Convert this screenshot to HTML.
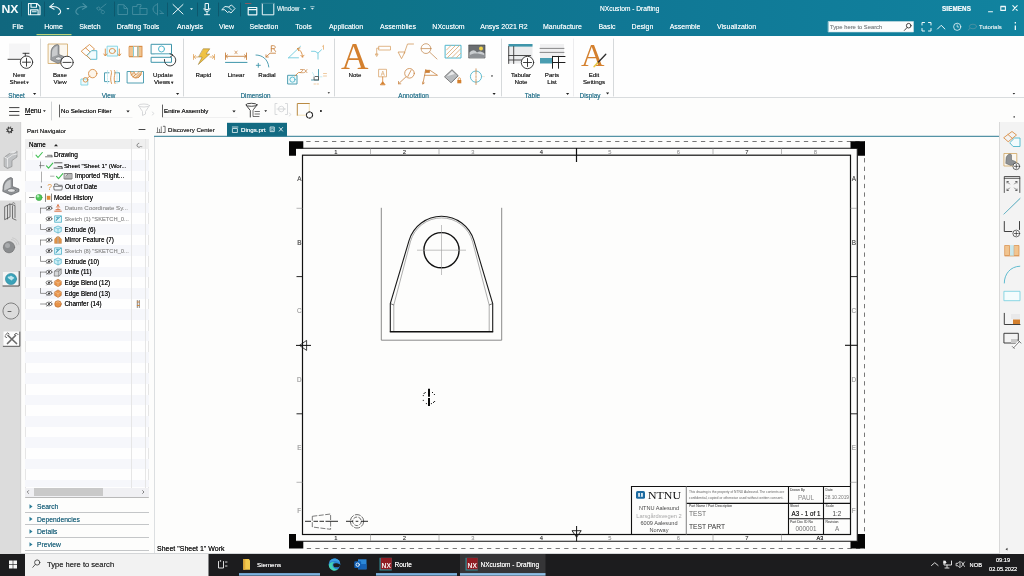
<!DOCTYPE html>
<html>
<head>
<meta charset="utf-8">
<title>NX - Drafting</title>
<style>
*{box-sizing:border-box;margin:0;padding:0}
html,body{width:1024px;height:576px;overflow:hidden;background:#fdfdfc;font-family:"Liberation Sans",sans-serif;}
#root{position:relative;width:1024px;height:576px;overflow:hidden;background:#fdfdfc;filter:blur(0.35px);}
.abs{position:absolute}
.t{position:absolute;white-space:nowrap;font-size:6.6px;line-height:8px;color:#222;text-shadow:0 0 0.3px currentColor;}
.w{color:#e8f3f6}
.c{text-align:center}
#hdr{left:0;top:0;width:1024px;height:36px;background:linear-gradient(90deg,#10677e 0%,#0f6c83 15%,#0e7389 38%,#107794 60%,#107e9b 85%,#11839f 100%)}
#ribbon{left:0;top:36px;width:1024px;height:62px;background:#fefefe;border-bottom:1px solid #d9dcde}
#selbar{left:0;top:98px;width:1024px;height:39px;}
#lside{left:0;top:122px;width:21px;height:433px;background:#dcdcdc}
#rside{left:999px;top:122px;width:25px;height:433px;background:#f3f3f3;border-left:1px solid #d9d9d9}
#task{left:0;top:554.3px;width:1024px;height:22px;background:#1c1c1e}
.gl{text-shadow:0 0 0.3px currentColor;position:absolute;font-size:6.4px;line-height:8px;color:#3a7f96;white-space:nowrap}
.rl{text-shadow:0 0 0.3px currentColor;position:absolute;font-size:6.15px;line-height:7.6px;color:#333;white-space:nowrap;text-align:center}
.vsep{position:absolute;width:1px;background:#d4d7d9}
.row{position:absolute;left:25px;width:124px;height:10.65px}
.tr{text-shadow:0 0 0.3px currentColor;position:absolute;white-space:nowrap;font-size:6.7px;line-height:8px;color:#1a1a1a}
.gr{color:#9a9a9a}
</style>
</head>
<body>
<div id="root">
<!-- HEADER -->
<div id="hdr" class="abs">
<svg class="abs" style="left:0;top:0" width="1024" height="36" viewBox="0 0 1024 36" fill="none" stroke-linecap="round" stroke-linejoin="round">
<!-- NX logo -->
<text x="1.5" y="13.2" font-family="Liberation Sans" font-weight="bold" font-size="10.6" fill="#f4fbfc" stroke="none" textLength="17" lengthAdjust="spacingAndGlyphs">NX</text>
<g stroke="#0c5368" stroke-width="0.8"><path d="M21.5 2v14M44.5 2v14M114.5 2v14M167.5 3v13M197.5 3v13M218.5 3v13M240.5 3v13"/></g>
<!-- save -->
<g stroke="#eef8fa" stroke-width="1.1"><path d="M28.5 3.5h8.5l3 3v8.2h-11.5z"/><path d="M31 3.8v3.4h5.5v-3.4M30.5 14.5v-4.6h7.6v4.6M32.2 11.8h4"/></g>
<!-- undo -->
<g stroke="#eef8fa" stroke-width="1.1"><path d="M53.5 3.6l-3.8 3.2l4.4 2.4"/><path d="M50 6.8c4-1 9 .2 10.3 3.4c.8 2-.6 3.6-2 4.2"/></g>
<path d="M67.2 8.6h1.5" stroke="#eef8fa" stroke-width="1.1"/>
<!-- redo dim -->
<g stroke="#4b93a5" stroke-width="1.1"><path d="M83 3.6l3.8 3.2l-4.4 2.4"/><path d="M86.5 6.8c-4-1-9 .2-10.3 3.4c-.8 2 .6 3.6 2 4.2"/></g>
<!-- dim cut -->
<g stroke="#3f8a9d" stroke-width="1"><path d="M97 8c1-2 3.5-1 3 1c-.5 2-3 1.500-3-1zM101 8l5-4M100 9.500l3 1c2 .6 2 3 0 3.200c-2 0-2.500-2-1-3.200"/></g>
<!-- dim copy -->
<g stroke="#3f8a9d" stroke-width="1"><path d="M118 5v9.500h9.500v-6l-3.500-3.500zM124 5v3.500h3.500"/></g>
<!-- dim paste -->
<g stroke="#3f8a9d" stroke-width="1"><path d="M133 6.500h4v-2h4v2h-1v8h-7zM140 8.500h7v6h-7"/></g>
<!-- dim -->
<g stroke="#3f8a9d" stroke-width="1"><path d="M157.500 3.500v11.500M153 9c0-3 2.500-4.500 4.500-4.500M153 9c0 3 2.500 5 4.500 5M160 10.500l3 3M160 13.500h3.500"/></g>
<!-- X -->
<path d="M173 4.500l10 9.500M183 4.500l-10 9.500" stroke="#eef8fa" stroke-width="1"/>
<path d="M190 8.200h3l-1.500 1.800z" fill="#eef8fa" stroke="none"/>
<!-- mic -->
<g stroke="#eef8fa" stroke-width="1"><path d="M205.500 3.500h3v6h-3zM204 8.500c0 4 6 4 6 0M207 11.500v3M204.500 14.700h5"/></g>
<!-- handshake -->
<g stroke="#e3f1f4" stroke-width="1"><path d="M222 9.500l3-3l3.500 .5l3-2l3.500 3.500l-4 4.500l-2-1.500l-1.500 1l-2.500-2.500z"/><path d="M228.500 7l3 3"/></g>
<!-- window icons -->
<g stroke="#eef8fa" stroke-width="1.2"><path d="M248.200 7.500h8.600v7.300h-8.600zM248.200 9.600h8.600"/><path d="M262.300 3.400v11.400h11.500v-11.400" stroke-width="1"/></g>
<path d="M245.500 3.500h5.500" stroke="#8a5a5f" stroke-width="1"/>
<path d="M262 3.300h12" stroke="#3b8699" stroke-width="1"/>
<path d="M303 8h3l-1.500 1.800z" fill="#e2eff2" stroke="none"/>
<path d="M310.700 6.700h3.400" stroke="#dcecf0" stroke-width="0.700"/><path d="M310.900 8.100h3l-1.500 1.700z" fill="#dcecf0" stroke="none"/>
<!-- home underline -->
<path d="M36.500 34.600h35" stroke="#b9d27a" stroke-width="1.100" stroke-linecap="butt"/>
<!-- search box -->
<rect x="828.500" y="21.500" width="85" height="10.500" fill="#fbfdfd" stroke="#cfe0e5" stroke-width="0.600"/>
<g stroke="#333" stroke-width="0.900"><circle cx="908.700" cy="25.700" r="2.300"/><path d="M907 27.600l-2.600 2.800"/></g>
<!-- right icons -->
<g stroke="#eef8fa" stroke-width="1"><path d="M922 25v-2.500h2.500M928.500 22.500h2.500v2.500M931 28.500v2.500h-2.500M924.500 31h-2.500v-2.500"/><path d="M937.500 29l3.700-3.700l3.700 3.700"/><circle cx="957.200" cy="26.800" r="3.600" stroke-width="0.800"/><path d="M957.200 24.800v2.200h1.500" stroke-width="0.700"/></g>
<g stroke="#4c91a3" stroke-width="0.900"><ellipse cx="973" cy="26.500" rx="3.600" ry="2.300"/><path d="M969.500 28.500l-1 1.500"/></g>
<g fill="#eef8fa" stroke="none"><rect x="1014.700" y="22" width="1.300" height="1.500"/><rect x="1014.700" y="25.500" width="1.300" height="4.500"/></g>
<!-- win controls -->
<g stroke="#eef8fa" stroke-width="1.100"><path d="M988.500 11.800h4"/><path d="M1000.800 6.800h4.600v3.600h-4.600zM1000.800 6.200h4.600" /><path d="M1012.800 5.600l4.400 4.800M1017.200 5.600l-4.400 4.800"/></g>
</svg>
<div class="t w c" style="left:-22.0px;width:80px;top:23px;font-size:7px">File</div>
<div class="t w c" style="left:13.5px;width:80px;top:23px;font-size:7px">Home</div>
<div class="t w c" style="left:50.0px;width:80px;top:23px;font-size:7px">Sketch</div>
<div class="t w c" style="left:98.0px;width:80px;top:23px;font-size:7px">Drafting Tools</div>
<div class="t w c" style="left:150.0px;width:80px;top:23px;font-size:7px">Analysis</div>
<div class="t w c" style="left:186.5px;width:80px;top:23px;font-size:7px">View</div>
<div class="t w c" style="left:224.0px;width:80px;top:23px;font-size:7px">Selection</div>
<div class="t w c" style="left:263.5px;width:80px;top:23px;font-size:7px">Tools</div>
<div class="t w c" style="left:306.0px;width:80px;top:23px;font-size:7px">Application</div>
<div class="t w c" style="left:358.0px;width:80px;top:23px;font-size:7px">Assemblies</div>
<div class="t w c" style="left:408.5px;width:80px;top:23px;font-size:7px">NXcustom</div>
<div class="t w c" style="left:464.0px;width:80px;top:23px;font-size:7px">Ansys 2021 R2</div>
<div class="t w c" style="left:522.5px;width:80px;top:23px;font-size:7px">Manufacture</div>
<div class="t w c" style="left:567.0px;width:80px;top:23px;font-size:7px">Basic</div>
<div class="t w c" style="left:602.5px;width:80px;top:23px;font-size:7px">Design</div>
<div class="t w c" style="left:645.0px;width:80px;top:23px;font-size:7px">Assemble</div>
<div class="t w c" style="left:696.5px;width:80px;top:23px;font-size:7px">Visualization</div>
<div class="t w" style="left:277px;top:4.500px;font-size:6.300px;color:#d4e8ed">Window</div>
<div class="t w" style="left:600px;top:4.500px;font-size:6.600px">NXcustom - Drafting</div>
<div class="t w" style="left:942px;top:5px;font-size:6.300px;font-weight:bold;letter-spacing:0.100px">SIEMENS</div>
<div class="t" style="left:830px;top:23px;font-size:5.800px;color:#8a8f92">Type here to Search</div>
<div class="t w" style="left:979px;top:23px;font-size:6px;color:#d6e8ec">Tutorials</div>
</div>
<!-- RIBBON -->
<div id="ribbon" class="abs">
<svg class="abs" style="left:0;top:0" width="1024" height="62" viewBox="0 36 1024 62" fill="none" stroke-linecap="round" stroke-linejoin="round">
<g stroke="#d6d9db" stroke-width="1"><path d="M40.500 39v57M183.500 39v57M334.500 39v57M501.500 39v57M613.500 39v57"/></g>
<path d="M573.500 39v57" stroke="#ececee" stroke-width="1"/>
<!-- new sheet -->
<rect x="9" y="43.500" width="21" height="15" fill="#f5f5f6" stroke="none"/>
<g stroke="#2b2b2b" stroke-width="0.900"><path d="M8 59.300h13M23 53.300h6M25.300 53.300v3"/><circle cx="26.500" cy="62.200" r="6.200" fill="#fefefe"/><path d="M22.500 62.200h8M26.500 58.200v8"/></g>
<!-- base view -->
<rect x="48.500" y="44" width="19" height="19.500" stroke="#cfa45f" stroke-width="0.800" fill="#fbf7ef"/>
<path d="M51 52c0-4 3-7 6.500-7.500l1.500 1v9l6 2.500v3l-7 3.500l-7-3.500z" fill="#9c9fa2" stroke="#5f6366" stroke-width="0.600"/>
<path d="M52 52.500c0-3 2.500-6 5.500-6.500v9l-5.500 2z" fill="#c9cbcd" stroke="none"/>
<ellipse cx="58.500" cy="58.500" rx="3" ry="1.600" fill="#e6e7e8" stroke="#5f6366" stroke-width="0.500"/>
<g stroke="#2b2b2b" stroke-width="0.900"><circle cx="67" cy="62.400" r="6.200" fill="#fefefe"/><path d="M63 62.400h8"/></g>
<!-- projected view -->
<g stroke-width="0.900"><path d="M81.500 51l8-6.500l5 4.500l-8 6.500zM85.500 47.800l5 4.500" stroke="#d88d45"/><path d="M87 55.500l4.500-4.800h5.300v8.600h-6z" stroke="#4fb6cc" fill="#f2fbfd"/><path d="M86.500 55.500l4 3.800" stroke="#d88d45"/></g>
<!-- view w/ arrows -->
<g stroke-width="0.900"><rect x="107.500" y="46.200" width="10" height="9.800" stroke="#7fd3e2" fill="#eefafc"/><ellipse cx="112.300" cy="51" rx="3" ry="2.500" stroke="#d88d45"/><path d="M105.300 49v6.500M103.800 54l1.500 2l1.500-2M119.300 49v6.500M117.800 54l1.500 2l1.500-2" stroke="#d88d45"/></g>
<!-- section -->
<g stroke-width="0.900"><rect x="129.500" y="46.500" width="4" height="10" fill="#f1c48f" stroke="#d88d45"/><rect x="138" y="46.500" width="4" height="10" fill="#f1c48f" stroke="#d88d45"/><path d="M129.500 46.300h12.500M129.500 56.800h12.500" stroke="#d88d45"/><path d="M133.500 46.500v10M138 46.500v10" stroke="#7fd3e2"/></g>
<!-- update views -->
<g stroke-width="1"><rect x="151.500" y="44.300" width="20" height="9.600" stroke="#3e95aa"/><circle cx="161.500" cy="49" r="3" stroke="#4fb6cc"/><rect x="151.500" y="57.300" width="20" height="5" stroke="#3e95aa"/><path d="M155 54.600h14" stroke="#bfeaf2"/></g>
<path d="M164.400 59.500a5.700 5.700 0 1 0 8-4.500" stroke="#2b2b2b" stroke-width="0.900"/><path d="M170 53.800l3 1.200l-2.500 1.800" stroke="#2b2b2b" stroke-width="0.900"/>
<!-- detail view -->
<g stroke-width="0.900"><circle cx="92.700" cy="73.600" r="4.200" stroke="#d88d45" fill="#fdf5ea"/><rect x="81.300" y="79" width="6.500" height="6" stroke="#7fd3e2" fill="#eefafc"/><circle cx="85.500" cy="79.800" r="2.300" stroke="#d88d45"/><path d="M87.300 78.200l2.600-2" stroke="#d88d45"/></g>
<!-- break view -->
<g stroke-width="0.900"><path d="M109 72.800h-4.500v8.800h4.500M115 72.800h4.500v8.800h-4.500" stroke="#3e95aa"/><path d="M107.500 70.500v13M117 70.500v13" stroke="#bfeaf2" stroke-dasharray="1.500 1"/><path d="M111 70.500c2 3-2 6 .5 13M114.500 70.500c2 3-2 6 .5 13" stroke="#d88d45"/></g>
<!-- breakout section -->
<g stroke-width="0.900"><rect x="127.500" y="71.500" width="16" height="11.500" stroke="#3e95aa"/><path d="M130.500 71.700a5.500 6.300 0 0 0 11 0" stroke="#d88d45" fill="#f7e3c8"/><path d="M134 71.700a2.200 2.600 0 0 0 4.400 0" stroke="#d88d45" fill="#fefefe" stroke-width="0.700"/><path d="M131.500 75l2.500-2.500M133 77l3-3M135.500 78l4.500-4.500M138.500 77.500l2.500-3" stroke="#c9782f" stroke-width="0.700"/></g>
<!-- rapid -->
<g stroke-width="0.800" stroke="#e0a45e"><path d="M193.500 54.500v5M214.500 54.500v5M194 57h4M214 57h-4M195.500 55.500l-1.700 1.500l1.700 1.500M212.500 55.500l1.700 1.500l-1.700 1.500"/></g>
<path d="M203.500 48.800h6.300l-3.800 5.200h3.800l-11.500 10.500l3.800-7.500h-3.200z" fill="#efc244" stroke="#8b6b22" stroke-width="0.500"/>
<!-- linear -->
<g stroke-width="0.900" stroke="#c98443"><path d="M225.500 53v6.500M246.500 53v6.500M226 56.300h20M227.500 54.800l-1.800 1.500l1.800 1.500M244.500 54.800l1.800 1.500l-1.800 1.500"/><path d="M234.800 51l2.400 2.800M237.200 51l-2.400 2.800" stroke-width="0.700"/></g>
<path d="M225.500 62.400h21.500" stroke="#3e95aa" stroke-width="1"/>
<!-- radial -->
<g stroke-width="0.900"><path d="M256 55c6 0 12 4 12.800 12" stroke="#3e95aa"/><path d="M256.300 65.300h4M258.300 63.300v4" stroke="#3e95aa"/><path d="M275.500 53.200h-5.500l-4 3.800M266 54.800v2.200h2.300" stroke="#c98443"/><path d="M271.300 51.500v-5.800h2.300c2.200 0 2.200 3 0 3h-2.300M273.600 48.700l2 2.800" stroke="#c98443"/></g>
<!-- angular -->
<g stroke-width="0.900"><path d="M288.500 57.800l12-11.500M288.500 57.800h10" stroke="#6fcbdc"/><path d="M297.500 48.500c3 1.500 5 4.500 5 8.500M297.500 48.500l2.500-.5M297.500 48.500l1.200 2.300M302.500 57l-1.700-1.700M302.500 57l1.500-1.800" stroke="#d88d45"/></g>
<!-- chamfer -->
<g stroke-width="0.900"><path d="M311.500 51.300h3.500l3 1.800v6M318 53.100l3.500-3.300" stroke="#6fcbdc"/><path d="M322.500 46.300l1-1v4" stroke="#e8b47a"/></g>
<!-- hole callout -->
<g stroke-width="0.900"><rect x="288" y="75.300" width="9" height="8.700" stroke="#3e95aa" fill="#eefafc"/><circle cx="292.500" cy="79.600" r="2.600" stroke="#4fb6cc"/><path d="M295 76l3.500-3.500h2" stroke="#d88d45"/><path d="M300.500 69.500h3l-3 3.200h3M304.500 69.500l2.500 3.200M307 69.500l-2.500 3.200" stroke="#c98443" stroke-width="0.700"/></g>
<!-- ordinate -->
<g stroke-width="0.900"><path d="M318.500 69.500v10.500M311.500 80h7" stroke="#3e95aa"/><path d="M314.500 76.500h4v3.500h-4z" stroke="#555"/><path d="M312.500 72.500l2 4M320 76.800h2" stroke="#bfeaf2"/><path d="M323.500 73.500h3M323.500 76h3M314 84h1.500M317 84h1.500" stroke="#e8b47a" stroke-width="0.700"/></g>
<!-- Big A note -->
<text x="341" y="68.700" font-family="Liberation Serif" font-size="37.500" fill="#d4802e" stroke="none" textLength="27.500" lengthAdjust="spacingAndGlyphs">A</text>
<!-- feature control frame -->
<g stroke-width="0.800" stroke="#d9a56b"><path d="M379 46.300h11.500v3.700h-11.500zM379 48.200h-2.300v6.500M375.500 54.300l1.200 2.200l1.200-2.200z"/></g>
<!-- surface finish -->
<g stroke-width="0.800" stroke="#d39a5e"><path d="M398.500 52h6.500l-3.300 6.300zM404.200 53.500l3.300-9.500h6" /></g>
<!-- balloon -->
<g stroke-width="0.800" stroke="#c58f5a"><circle cx="426" cy="48.600" r="4.900"/><path d="M421.200 48.600h9.600M429.500 52l7.500 7"/></g>
<!-- crosshatch -->
<rect x="445.500" y="45.300" width="15.500" height="12.700" stroke="#4fb6cc" stroke-width="1" fill="#fefefe"/>
<g stroke="#dba671" stroke-width="0.800"><path d="M446.500 50l4.500-4.500M446.500 54.500l9-9M447.500 57.500l12-12M452 57.500l8.500-8.500M456.500 57.500l4-4"/></g>
<!-- image -->
<rect x="469" y="45" width="16" height="13" fill="#6a6d70" stroke="#3a3c3e" stroke-width="0.600"/>
<path d="M469.500 57.500v-5c3-3 5-3 7.500 0c2-1.500 4-1.500 7.500 1v4z" fill="#c9cccf" stroke="none"/>
<path d="M469.500 57.700v-2.500c4-2.500 9-2 15 0v2.500z" fill="#8d9094" stroke="none"/>
<circle cx="481" cy="48.500" r="2" fill="#f0d24a" stroke="none"/>
<!-- datum feature -->
<g stroke-width="0.800" stroke="#d9a56b"><rect x="379" y="69.300" width="7.500" height="7.500"/><path d="M381.300 75.500l1.500-4.500l1.500 4.500M381.800 74h2" stroke-width="0.600"/><path d="M382.700 77v6" stroke="#d4802e"/><path d="M380.500 84.500l2.200-2.800l2.200 2.800z" fill="#d4802e" stroke="#d4802e"/></g>
<!-- datum target -->
<g stroke-width="0.800" stroke="#c98443"><circle cx="409.500" cy="73.300" r="4.800"/><path d="M407.800 76.500l3.400-6.500M406 76.800l-7.500 7M398.500 81.500v2.300h2.300"/></g>
<!-- flag -->
<g stroke-width="0.800" stroke="#c98443"><path d="M425.800 69.500l-3 14.500M422.800 82l0 2l1.500-1"/><path d="M425.500 70.300h4.500l7.500 5h-13" /><path d="M426 70.500h3.500v2h-4z" fill="#d4802e"/></g>
<!-- diamond w/ lock -->
<path d="M444.800 76.500l7.200-6.800l6.200 6l-6.800 6.800z" fill="#b9bcbf" stroke="#444" stroke-width="0.700"/>
<path d="M446.800 76.300l5.200-5l2.800 2.800z" fill="#e9eaeb" stroke="none"/>
<rect x="457.300" y="80" width="4" height="3.300" fill="#d4802e" stroke="none"/><path d="M458.200 80v-1.200a1.100 1.100 0 0 1 2.200 0v1.200" stroke="#d4802e" stroke-width="0.700"/>
<!-- centerline -->
<circle cx="476" cy="76.600" r="5.600" stroke="#4fb6cc" stroke-width="0.900"/>
<path d="M476 68.800v5.500M476 75.700v1.800M476 78.800v5.700" stroke="#c98443" stroke-width="0.800"/><path d="M482 76.600h2.500" stroke="#f0d9bf" stroke-width="0.600"/>
<!-- tabular note -->
<rect x="508.500" y="44" width="24" height="19.500" fill="#ebeced" stroke="none"/>
<rect x="508.500" y="44" width="24" height="2.600" fill="#3e95aa" stroke="none"/>
<g stroke="#3a3a3a" stroke-width="0.900"><path d="M508.700 46.500v17M513.700 46.500v17M508.700 55.500h22M508.700 60h13"/></g>
<g stroke="#2b2b2b" stroke-width="0.900"><circle cx="527.500" cy="62.500" r="6.200" fill="#fefefe"/><path d="M523.500 62.500h8M527.500 58.500v8"/></g>
<!-- parts list -->
<rect x="540" y="44" width="24" height="14" fill="#f0f0f1" stroke="none"/>
<g stroke="#5a5a5a" stroke-width="0.700"><path d="M540 48.400h24M540 52.400h24"/></g>
<rect x="540" y="58" width="12.500" height="5.500" fill="#4a9db1" stroke="none"/>
<rect x="552.500" y="56.500" width="12.500" height="12" fill="#fefefe" stroke="none"/>
<g stroke="#1f1f1f" stroke-width="1"><path d="M552.500 56.300v12M558.500 56.300v12M552.500 56.500h12.500M552.500 62.500h12.500"/></g>
<!-- edit settings -->
<text x="581" y="65.500" font-family="Liberation Serif" font-size="32.500" fill="#d4802e" stroke="none" textLength="23.500" lengthAdjust="spacingAndGlyphs">A</text>
<path d="M605.800 54.200l-8.500 9" stroke="#2f2f2f" stroke-width="1.300"/><path d="M597.500 63l-3.300 3.500" stroke="#e8c84a" stroke-width="1.800"/>
<!-- dropdown arrows -->
<g fill="#222" stroke="none"><path d="M33 93h3.200l-1.600 1.900zM176 93h3.200l-1.600 1.900zM327.600 92.300h2.400l-1.200 1.500zM492.500 93h3.200l-1.600 1.900zM566 93h3.200l-1.600 1.900zM606 92.500h3.200l-1.600 1.900zM1012.600 93h2.600l-1.300 1.600zM490.800 75.500h2.400l-1.200 1.500z"/></g>
</svg>
<div class="rl" style="left:-11px;width:60px;top:35.1px;text-align:center;">New</div>
<div class="rl" style="left:-10.5px;width:60px;top:42.1px;text-align:center;">Sheet<span style="font-size:4px">&#9660;</span></div>
<div class="rl" style="left:30px;width:60px;top:35.1px;text-align:center;">Base</div>
<div class="rl" style="left:30px;width:60px;top:42.1px;text-align:center;">View</div>
<div class="rl" style="left:133px;width:60px;top:35.1px;text-align:center;">Update</div>
<div class="rl" style="left:134px;width:60px;top:42.1px;text-align:center;">Views<span style="font-size:4px">&#9660;</span></div>
<div class="gl" style="left:-13.5px;width:60px;top:55.8px;text-align:center;">Sheet</div>
<div class="gl" style="left:78.5px;width:60px;top:55.8px;text-align:center;">View</div>
<div class="rl" style="left:173.5px;width:60px;top:35.1px;text-align:center;">Rapid</div>
<div class="rl" style="left:206px;width:60px;top:35.1px;text-align:center;">Linear</div>
<div class="rl" style="left:237px;width:60px;top:35.1px;text-align:center;">Radial</div>
<div class="rl" style="left:325px;width:60px;top:35.1px;text-align:center;">Note</div>
<div class="rl" style="left:491px;width:60px;top:35.1px;text-align:center;">Tabular</div>
<div class="rl" style="left:491px;width:60px;top:42.1px;text-align:center;">Note</div>
<div class="rl" style="left:522px;width:60px;top:35.1px;text-align:center;">Parts</div>
<div class="rl" style="left:522px;width:60px;top:42.1px;text-align:center;">List</div>
<div class="rl" style="left:564px;width:60px;top:35.1px;text-align:center;">Edit</div>
<div class="rl" style="left:564px;width:60px;top:42.1px;text-align:center;">Settings</div>
<div class="gl" style="left:225.5px;width:60px;top:55.8px;text-align:center;">Dimension</div>
<div class="gl" style="left:383.5px;width:60px;top:55.8px;text-align:center;">Annotation</div>
<div class="gl" style="left:502.5px;width:60px;top:55.8px;text-align:center;">Table</div>
<div class="gl" style="left:560px;width:60px;top:55.8px;text-align:center;">Display</div>
</div>
<!-- SELECTION BAR -->
<div id="selbar" class="abs">
<svg class="abs" style="left:0;top:0" width="1024" height="39" viewBox="0 98 1024 39" fill="none" stroke-linecap="round" stroke-linejoin="round">
<g stroke="#2b2b2b" stroke-width="0.900"><path d="M9.500 107.600h9.500M9.500 111.500h9.500M9.500 115.300h9.500"/></g>
<path d="M51.500 102v18" stroke="#d0d3d5" stroke-width="1"/>
<path d="M59.500 105v12M162.500 105v12" stroke="#3a3a3a" stroke-width="0.800"/>
<path d="M60 117.500h72M163 117.500h74" stroke="#ececec" stroke-width="0.800"/>
<g fill="#222" stroke="none"><path d="M43 110.300h2.800l-1.400 1.700zM126.300 110.600h3.400l-1.700 2zM232.300 110.600h3.400l-1.700 2zM264.300 110.300h2.800l-1.400 1.700z"/><rect x="320" y="110.100" width="1.800" height="1.800"/><rect x="1013.500" y="116.300" width="1.400" height="1.200"/></g>
<!-- dim funnel -->
<g stroke="#d2d4d6" stroke-width="0.900"><ellipse cx="144" cy="105.500" rx="5.500" ry="1.500"/><path d="M138.500 105.500l4 6v4l3-1.500v-2.500l4-6"/><path d="M152.500 112l1.200 1.500l-1.200 1.500"/></g>
<!-- funnel 2 -->
<g stroke="#333" stroke-width="0.900"><ellipse cx="251.500" cy="104.800" rx="5.500" ry="1.500"/><path d="M246 105l4.300 5.500v6.500M257 105l-3.500 4.500"/><path d="M253 110.500v6h6M255 111.500h4.500M255 114h4.500" stroke-width="0.700"/></g>
<!-- dim icon -->
<g stroke="#d4d6d8" stroke-width="0.900"><path d="M277 103.500h-2v11h2M285.500 103.500h2v11h-2M277 109h8.500"/><circle cx="281.300" cy="109" r="2.800"/><path d="M289.500 113l1.200 1.500l-1.200 1.500"/></g>
<!-- rect select -->
<path d="M309.300 103.500v8M309.300 115.200h-12" stroke="#f1dba6" stroke-width="0.800"/><path d="M297.300 115.200v-11.700h12" stroke="#b98a42" stroke-width="1"/>
<circle cx="309.500" cy="115" r="3.100" fill="#fefefe" stroke="#1f1f1f" stroke-width="1.100" stroke-dasharray="2.100 1.150"/>
<!-- active tab -->
<rect x="227" y="122.800" width="60" height="13.700" fill="#136b82" stroke="none"/>
<path d="M154 136.300h845" stroke="#2a7890" stroke-width="1" stroke-linecap="butt"/>
<!-- tab icons -->
<g stroke="#555" stroke-width="0.700"><path d="M157.500 132.300v-4.500M159.500 132.300v-3M161.300 132.300v-5.500M156.800 132.500h5"/><path d="M163.300 126.300h1.800v6.200h-1.800" stroke="#333"/></g>
<g stroke="#e6f2f5" stroke-width="0.800"><path d="M232.300 127h5.600M232.800 128.500h4.600v4h-4.600z"/><rect x="270.500" y="127" width="3.800" height="4.600"/><path d="M271.500 128.300h1.800v2h-1.800z" stroke-width="0.500"/><path d="M279.300 127.500l3.300 3.600M282.600 127.500l-3.300 3.600" stroke-width="0.900"/></g>
<!-- nav title -->
<path d="M139 129.500h6" stroke="#333" stroke-width="0.900"/>
</svg>
<div class="t" style="left:25px;top:9.2px;font-size:6.500px"><u>M</u>enu</div>
<div class="t" style="left:61px;top:9.2px;font-size:6.200px">No Selection Filter</div>
<div class="t" style="left:164px;top:9.2px;font-size:6.200px">Entire Assembly</div>
<div class="t" style="left:27px;top:28.500px;font-size:6.100px;color:#333">Part Navigator</div>
<div class="t" style="left:168px;top:27.5px;font-size:6.100px;color:#333">Discovery Center</div>
<div class="t w" style="left:241px;top:27.5px;font-size:6.200px;color:#f3fafb">Dings.prt</div>
</div>
<!-- LEFT SIDEBAR -->
<div id="lside" class="abs">
<svg class="abs" style="left:0;top:0" width="22" height="433" viewBox="0 122 22 433" fill="none" stroke-linecap="round" stroke-linejoin="round">
<rect x="0" y="171" width="21" height="29.500" fill="#fdfdfd"/>
<path d="M20.700 122v49M20.700 200.500v354" stroke="#c9c9c9" stroke-width="0.600"/>
<!-- gear -->
<circle cx="9.700" cy="130" r="2" stroke="#333" stroke-width="1.100"/><circle cx="9.700" cy="130" r="3" stroke="#333" stroke-width="1.100" stroke-dasharray="1.100 1.256" stroke-linecap="butt"/>
<!-- part 1 -->
<path d="M4.500 157l5-3.500h4l3.500-2.500v6l-5 3.500v6l-4.500 2l-3-2z" fill="#bfc1c3" stroke="#777" stroke-width="0.500"/>
<path d="M4.500 157l3 1.500l5-3.500l4.500-1M7.500 158.500v8" stroke="#f0f0f0" stroke-width="0.800"/>
<path d="M9.500 153.500l3-2.500h4.500l-3.500 2.500z" fill="#e4e5e6" stroke="none"/>
<!-- part 2 shell -->
<path d="M3 188c0-5 3-9.500 8-10.500l1.500 1v8l6.500 2.500v2.500l-8 3.500l-8-3.500z" fill="#8e9194" stroke="#55585b" stroke-width="0.600"/>
<path d="M4.200 188c0-4 2.500-7.500 6.500-8.500v8l-6.500 3z" fill="#c6c8ca" stroke="none"/>
<ellipse cx="11.500" cy="190.500" rx="4" ry="1.800" fill="#e2e3e4" stroke="#55585b" stroke-width="0.500"/>
<!-- book -->
<g stroke="#444" stroke-width="0.700"><path d="M5 206.500l5-2.500v13l-5 2.500zM7.500 205.500v13.500M10 204l5 1.500v12M12.500 206v12.500l3.500 1.500"/><path d="M12 203.500l2-1l1 1.500" stroke-width="0.500"/></g>
<!-- sphere -->
<circle cx="9" cy="247.200" r="5.700" fill="#8a8c8e" stroke="#666" stroke-width="0.500"/><circle cx="7.500" cy="245.500" r="2.500" fill="#a9abad" stroke="none"/>
<path d="M11.500 239.500c3 .5 5 2.500 5.500 5.500M12.500 237.800c3.500 .700 6 3.300 6.500 6.700" stroke="#bdbdbd" stroke-width="0.600"/>
<!-- globe -->
<rect x="3" y="272" width="16" height="14" fill="#f4f4f4" stroke="none"/><path d="M3 286h16.200v-14.500" stroke="#333" stroke-width="0.900"/>
<circle cx="11" cy="279" r="5.600" fill="#3ba2b8" stroke="#1f7d93" stroke-width="0.500"/><path d="M7.500 277c1.500-1 2.500 0 3.500-1.500c1 1.500 2.500 1 3.500 2.500c-1 1-2 .5-2.500 2.500c-1.500 0-1.500-1.500-3-1.500z" fill="#bfe6ee" stroke="none"/>
<!-- clock -->
<circle cx="11" cy="311" r="8" stroke="#555" stroke-width="0.700" stroke-dasharray="3 0.800"/><path d="M8 311.500h3" stroke="#444" stroke-width="0.800"/>
<!-- tools -->
<rect x="3.500" y="331.500" width="16" height="14.700" fill="#fdfdfd" stroke="none"/><path d="M3.300 346.300h16.500v-14.300" stroke="#333" stroke-width="0.800"/>
<g stroke="#6a6a6a" stroke-width="1.700"><path d="M7.500 343.500l8-8M8 335.500l8.500 8"/></g><g stroke="#555" stroke-width="1"><path d="M14.500 334.500c1-1.500 2.500-1.500 3.500 0M5.500 335l2-2l1.500 1M5 336.500l1.500 1"/></g>
</svg>
</div>
<!-- NAVIGATOR -->
<div id="nav" class="abs" style="left:0;top:0;width:155px;height:555px">
<div class="abs" style="left:24.500px;top:138.500px;width:124.500px;height:359.500px;border:1px solid #e6e6e6;border-bottom:2.400px solid #b9b9b9;background:#fefefe"></div>
<div class="abs" style="left:25px;top:139px;width:123.500px;height:10px;background:#efefef"></div>
<div class="abs" style="left:25px;top:160.16px;width:123.500px;height:10.66px;background:#f6f7fb"></div>
<div class="abs" style="left:25px;top:181.48px;width:123.500px;height:10.66px;background:#f6f7fb"></div>
<div class="abs" style="left:25px;top:202.80px;width:123.500px;height:10.66px;background:#f6f7fb"></div>
<div class="abs" style="left:25px;top:224.12px;width:123.500px;height:10.66px;background:#f6f7fb"></div>
<div class="abs" style="left:25px;top:245.44px;width:123.500px;height:10.66px;background:#f6f7fb"></div>
<div class="abs" style="left:25px;top:266.76px;width:123.500px;height:10.66px;background:#f6f7fb"></div>
<div class="abs" style="left:25px;top:288.08px;width:123.500px;height:10.66px;background:#f6f7fb"></div>
<div class="abs" style="left:25px;top:309.40px;width:123.500px;height:10.66px;background:#f6f7fb"></div>
<div class="abs" style="left:25px;top:330.72px;width:123.500px;height:10.66px;background:#f6f7fb"></div>
<div class="abs" style="left:25px;top:352.04px;width:123.500px;height:10.66px;background:#f6f7fb"></div>
<div class="abs" style="left:25px;top:373.36px;width:123.500px;height:10.66px;background:#f6f7fb"></div>
<div class="abs" style="left:25px;top:394.68px;width:123.500px;height:10.66px;background:#f6f7fb"></div>
<div class="abs" style="left:25px;top:416.00px;width:123.500px;height:10.66px;background:#f6f7fb"></div>
<div class="abs" style="left:25px;top:437.32px;width:123.500px;height:10.66px;background:#f6f7fb"></div>
<div class="abs" style="left:25px;top:458.64px;width:123.500px;height:10.66px;background:#f6f7fb"></div>
<div class="abs" style="left:25px;top:479.96px;width:123.500px;height:7.54px;background:#f6f7fb"></div>
<div class="abs" style="left:131px;top:139px;width:1px;height:348.500px;background:#e6e6e6"></div>
<div class="abs" style="left:144.500px;top:139px;width:1px;height:348.500px;background:#e6e6e6"></div>
<div class="abs" style="left:25px;top:487.500px;width:123.500px;height:9px;background:#f0f0f3"></div>
<div class="abs" style="left:34px;top:488px;width:68.700px;height:8px;background:#c9c9c9"></div>
<div class="abs" style="left:24.500px;top:512.3px;width:124.500px;height:0.800px;background:#c4c6c8"></div>
<div class="abs" style="left:24.500px;top:524.2px;width:124.500px;height:0.800px;background:#c4c6c8"></div>
<div class="abs" style="left:24.500px;top:537.0px;width:124.500px;height:0.800px;background:#c4c6c8"></div>
<div class="abs" style="left:24.500px;top:550.1px;width:124.500px;height:0.800px;background:#c4c6c8"></div>
<div class="abs" style="left:154px;top:137px;width:1px;height:417px;background:#dcdfe1"></div>
<div class="abs" style="left:21px;top:553px;width:979px;height:1px;background:#d4d6d8"></div>
<svg class="abs" style="left:0;top:122px" width="155" height="433" viewBox="0 122 155 433" fill="none" stroke-linecap="round" stroke-linejoin="round">
<path d="M54 146.300h4l-2-2.300z" fill="#222"/>
<path d="M138.800 143.300a2 2 0 1 0 1.600 3.400" stroke="#555" stroke-width="0.700"/><path d="M141.700 146.700h.1" stroke="#555" stroke-width="0.700"/>
<g stroke="#555" stroke-width="0.700"><path d="M28.600 490.600l-1.400 1.400l1.400 1.400M142.600 490.600l1.400 1.400l-1.400 1.400"/></g>
<path d="M29.500 504.3l3 2.200l-3 2.200z" fill="#2b7c96"/>
<path d="M29.500 516.8l3 2.200l-3 2.200z" fill="#2b7c96"/>
<path d="M29.500 529.3l3 2.200l-3 2.200z" fill="#2b7c96"/>
<path d="M29.500 542.1999999999999l3 2.200l-3 2.200z" fill="#2b7c96"/>
<path d="M32.500 152v5" stroke="#ddd" stroke-width="0.600"/><path d="M36 155.2l2 2.300l4.300-5" stroke="#3fbf52" stroke-width="1.100"/>
<g stroke="#444" stroke-width="0.700"><path d="M45.500 156.800h6.500M47.500 155.300h4.500v1.500"/></g>
<g stroke="#555" stroke-width="0.600"><path d="M39.500 165.600h4.500M40.500 162v6"/></g><path d="M46.5 165.8l2 2.300l4.300-5" stroke="#3fbf52" stroke-width="1.100"/>
<g stroke="#333" stroke-width="0.800"><path d="M54.500 162.800h7.500M54 168.200h8.500M58 166.500h4v1.700"/></g>
<g stroke="#777" stroke-width="0.600"><path d="M41.500 172v10M50.500 176.200h3.500"/></g><path d="M56.5 176.4l2 2.300l4.300-5" stroke="#3fbf52" stroke-width="1.100"/>
<g stroke="#555" stroke-width="0.700"><rect x="64.500" y="173.500" width="7.500" height="5.500" fill="#d8d8d8"/><path d="M66 179v-3l2-2v5M70 174v5" stroke-width="0.500"/></g>
<circle cx="41.300" cy="187" r="0.700" fill="#333"/><text x="47.300" y="189.800" font-family="Liberation Sans" font-size="8.500" fill="#e39a4a">?</text><g stroke="#444" stroke-width="0.700"><path d="M54.500 185.300v-1.300h3l.8 1.300h3.700M54 186.300h8.500l-.7 3.700h-7.200z"/></g>
<path d="M29.500 197.500h4.500" stroke="#444" stroke-width="0.700"/><circle cx="39" cy="197.500" r="3.100" fill="#52c75a" stroke="#2f9a3c" stroke-width="0.500"/><circle cx="38" cy="196.300" r="1.200" fill="#b8f0bd"/><path d="M45.500 194v7.500M51.500 194v7.500" stroke="#333" stroke-width="0.600"/><rect x="46.800" y="195.800" width="3.600" height="4" fill="#e08a35"/>
<path d="M40.500 208.2h5M40.500 208.2v5" stroke="#555" stroke-width="0.600"/><ellipse cx="49" cy="208.2" rx="3" ry="1.900" stroke="#333" stroke-width="0.600"/><circle cx="49" cy="208.2" r="1" fill="#333"/><path d="M46.5 210.7l5-5" stroke="#333" stroke-width="0.400"/>
<path d="M58 204.7v4.500M56.5 207.2l1.500-2.500l1.500 2.500" stroke="#d4622e" stroke-width="0.700"/><path d="M54.7 211.2h6.600M56 209.7h4" stroke="#d4622e" stroke-width="0.900"/>
<ellipse cx="49" cy="218.8" rx="3" ry="1.900" stroke="#333" stroke-width="0.600"/><circle cx="49" cy="218.8" r="1" fill="#333"/><path d="M46.5 221.3l5-5" stroke="#333" stroke-width="0.400"/>
<rect x="55" y="215.8" width="6.500" height="6.500" fill="#dff5fa" stroke="#3aa7c2" stroke-width="0.700"/><path d="M56 220.8l4.500-4.500M56.5 217.3h2l-2 2" stroke="#2a8fae" stroke-width="0.800"/>
<path d="M40.500 224.5v5h5" stroke="#555" stroke-width="0.600"/><ellipse cx="49" cy="229.5" rx="3" ry="1.900" stroke="#333" stroke-width="0.600"/><circle cx="49" cy="229.5" r="1" fill="#333"/><path d="M46.5 232.0l5-5" stroke="#333" stroke-width="0.400"/>
<path d="M54.7 227.5l3.300-1.500l3.300 1.500v4l-3.300 1.500l-3.300-1.500z" fill="#cfeff6" stroke="#3aa7c2" stroke-width="0.600"/><path d="M54.7 227.5l3.300 1.500l3.300-1.500M58 229.0v4" stroke="#3aa7c2" stroke-width="0.500"/>
<path d="M40.500 240.1h5M40.500 240.1v5" stroke="#555" stroke-width="0.600"/><ellipse cx="49" cy="240.1" rx="3" ry="1.900" stroke="#333" stroke-width="0.600"/><circle cx="49" cy="240.1" r="1" fill="#333"/><path d="M46.5 242.6l5-5" stroke="#333" stroke-width="0.400"/>
<path d="M54.7 243.1v-4l2.500-2.500v6.500zM61.3 243.1v-4l-2.500-2.500v6.500z" fill="#e59a4c" stroke="#b9661f" stroke-width="0.500"/><path d="M58 236.6v7" stroke="#7a4a1a" stroke-width="0.500"/>
<ellipse cx="49" cy="250.8" rx="3" ry="1.900" stroke="#333" stroke-width="0.600"/><circle cx="49" cy="250.8" r="1" fill="#333"/><path d="M46.5 253.3l5-5" stroke="#333" stroke-width="0.400"/>
<rect x="55" y="247.8" width="6.500" height="6.500" fill="#dff5fa" stroke="#3aa7c2" stroke-width="0.700"/><path d="M56 252.8l4.500-4.500M56.5 249.3h2l-2 2" stroke="#2a8fae" stroke-width="0.800"/>
<path d="M40.500 256.4v5h5" stroke="#555" stroke-width="0.600"/><ellipse cx="49" cy="261.4" rx="3" ry="1.900" stroke="#333" stroke-width="0.600"/><circle cx="49" cy="261.4" r="1" fill="#333"/><path d="M46.5 263.9l5-5" stroke="#333" stroke-width="0.400"/>
<path d="M54.7 259.4l3.300-1.500l3.300 1.500v4l-3.300 1.500l-3.300-1.500z" fill="#cfeff6" stroke="#3aa7c2" stroke-width="0.600"/><path d="M54.7 259.4l3.300 1.500l3.300-1.500M58 260.9v4" stroke="#3aa7c2" stroke-width="0.500"/>
<path d="M40.500 272.1h5M40.500 272.1v5" stroke="#555" stroke-width="0.600"/><ellipse cx="49" cy="272.1" rx="3" ry="1.900" stroke="#333" stroke-width="0.600"/><circle cx="49" cy="272.1" r="1" fill="#333"/><path d="M46.5 274.6l5-5" stroke="#333" stroke-width="0.400"/>
<path d="M54.7 271.1l2.500-2h4v5l-2.500 2h-4z" fill="#d7d9db" stroke="#555" stroke-width="0.600"/><path d="M54.7 271.1h4l2.500-2M58.7 271.1v5" stroke="#555" stroke-width="0.500"/>
<ellipse cx="49" cy="282.7" rx="3" ry="1.900" stroke="#333" stroke-width="0.600"/><circle cx="49" cy="282.7" r="1" fill="#333"/><path d="M46.5 285.2l5-5" stroke="#333" stroke-width="0.400"/>
<path d="M54.7 281.2l3.300-2l3.300 2v3.500l-3.300 2l-3.300-2z" fill="#e8944a" stroke="#a85a1c" stroke-width="0.500"/><path d="M54.7 281.2l3.300 1.700l3.300-1.700M58 282.9v3.800" stroke="#f6cfa3" stroke-width="0.500"/>
<path d="M40.500 288.4v5h5" stroke="#555" stroke-width="0.600"/><ellipse cx="49" cy="293.4" rx="3" ry="1.900" stroke="#333" stroke-width="0.600"/><circle cx="49" cy="293.4" r="1" fill="#333"/><path d="M46.5 295.9l5-5" stroke="#333" stroke-width="0.400"/>
<path d="M54.7 291.9l3.300-2l3.300 2v3.500l-3.300 2l-3.300-2z" fill="#e8944a" stroke="#a85a1c" stroke-width="0.500"/><path d="M54.7 291.9l3.300 1.700l3.300-1.700M58 293.59999999999997v3.800" stroke="#f6cfa3" stroke-width="0.500"/>
<path d="M40.500 304h5" stroke="#555" stroke-width="0.600"/><ellipse cx="49" cy="304" rx="3" ry="1.900" stroke="#333" stroke-width="0.600"/><circle cx="49" cy="304" r="1" fill="#333"/><path d="M46.5 306.5l5-5" stroke="#333" stroke-width="0.400"/>
<circle cx="58" cy="304" r="3.300" fill="#e8944a" stroke="#a85a1c" stroke-width="0.500"/><path d="M56 302.5l2-1l2.500 1.500" stroke="#f6cfa3" stroke-width="0.600"/>
<path d="M137.300 300.500v7M139.300 300.500v7" stroke="#333" stroke-width="0.600"/><path d="M137.300 302h2M137.300 305.500h2" stroke="#d4802e" stroke-width="0.900"/>
</svg>
<div class="tr " style="left:29px;top:141.2px;font-size:6.3px">Name</div>
<div class="tr " style="left:54px;top:151.2px;font-size:6.5px">Drawing</div>
<div class="tr " style="left:64px;top:161.8px;font-size:6.1px">Sheet "Sheet 1" (Wor...</div>
<div class="tr " style="left:75px;top:172.4px;font-size:6.35px">Imported "Right...</div>
<div class="tr " style="left:65px;top:183.1px;font-size:6.3px">Out of Date</div>
<div class="tr " style="left:54px;top:193.7px;font-size:6.4px">Model History</div>
<div class="tr gr" style="left:64.5px;top:204.4px;font-size:6.15px">Datum Coordinate Sy...</div>
<div class="tr gr" style="left:64.5px;top:215.0px;font-size:5.75px">Sketch (1) "SKETCH_0...</div>
<div class="tr " style="left:64.5px;top:225.7px;font-size:6.3px">Extrude (6)</div>
<div class="tr " style="left:64.5px;top:236.3px;font-size:6.3px">Mirror Feature (7)</div>
<div class="tr gr" style="left:64.5px;top:247.0px;font-size:5.75px">Sketch (8) "SKETCH_0...</div>
<div class="tr " style="left:64.5px;top:257.6px;font-size:6.3px">Extrude (10)</div>
<div class="tr " style="left:64.5px;top:268.3px;font-size:6.3px">Unite (11)</div>
<div class="tr " style="left:64.5px;top:278.9px;font-size:6.3px">Edge Blend (12)</div>
<div class="tr " style="left:64.5px;top:289.6px;font-size:6.3px">Edge Blend (13)</div>
<div class="tr " style="left:64.5px;top:300.2px;font-size:6.3px">Chamfer (14)</div>
<div class="tr" style="left:37px;top:503.2px;font-size:6.700px;color:#2f6f86">Search</div>
<div class="tr" style="left:37px;top:515.7px;font-size:6.700px;color:#2f6f86">Dependencies</div>
<div class="tr" style="left:37px;top:528.2px;font-size:6.700px;color:#2f6f86">Details</div>
<div class="tr" style="left:37px;top:541.1px;font-size:6.700px;color:#2f6f86">Preview</div>
</div>
<!-- CANVAS -->
<div id="canvas" class="abs" style="left:155px;top:137px;width:844px;height:416px">
<svg class="abs" style="left:0;top:0" width="844" height="416" viewBox="155 137 844 416" fill="none" stroke-linecap="butt" stroke-linejoin="miter">
<path d="M303.500 141.500H864.500V548.500H303.500" stroke="#555" stroke-width="0.800" stroke-dasharray="4.300 4.280" stroke-dashoffset="5.830"/>
<path d="M296 148.300H857.300V541.300H296" stroke="#111" stroke-width="1.100"/>
<rect x="302.500" y="155.200" width="548" height="379.300" stroke="#111" stroke-width="1.200"/>
<g fill="#050505"><path d="M289 141.200h14.300v7.300h-7.300v7.200h-7z"/><path d="M865 141.200h-14.500v7.300h7.300v7.200h7.200z"/><path d="M289 548.500h14.300v-7.300h-7.300v-7.200h-7z"/><path d="M865 548.500h-14.500v-7.300h7.300v-7.200h7.200z"/></g>
<path d="M370.5 148.500v6.500M370.5 534.500v6.500M439 148.500v6.500M439 534.500v6.500M713 148.500v6.500M713 534.500v6.500M781.5 148.500v6.500M781.5 534.500v6.500" stroke="#9a9a9a" stroke-width="0.700"/>
<path d="M576.500 148v14" stroke="#111" stroke-width="1.200"/>
<path d="M296.500 208.300h6M296.500 482.300h6M850.500 208.300h6.500M850.500 482.300h6.500" stroke="#9a9a9a" stroke-width="0.700"/>
<path d="M296.500 276.600h6M296.500 413.800h6M850.500 276.600h6.500M850.500 413.800h6.500" stroke="#111" stroke-width="0.900"/>
<path d="M845 345.300h12.500" stroke="#111" stroke-width="1.100"/>
<path d="M296 345.400h15" stroke="#111" stroke-width="1"/><path d="M299.500 345.400l7.100-5v10z" stroke="#111" stroke-width="0.800"/>
<path d="M576.600 526v15.300" stroke="#111" stroke-width="1"/><path d="M572 530.700h9.200l-4.600 6.500z" stroke="#111" stroke-width="0.900"/>
<path d="M381.300 207.800V340.200H501.700V207.800" stroke="#7d7d7d" stroke-width="0.900"/>
<path d="M390.3 331.700V303.5L409.1 240.4A33.8 33.8 0 0 1 473.9 240.4L492.7 303.5V331.700" stroke="#1a1a1a" stroke-width="1.100"/>
<path d="M389.8 331.800H493.2" stroke="#111" stroke-width="1.500"/>
<path d="M393.8 331V305L410.4 241.8A32.199999999999996 32.199999999999996 0 0 1 472.6 241.8L489.2 305V331" stroke="#777" stroke-width="0.600"/>
<path d="M390.3 303.5L393.8 305M492.7 303.5L489.2 305" stroke="#333" stroke-width="0.700"/>
<circle cx="441.500" cy="250.200" r="17.600" stroke="#111" stroke-width="1.400"/>
<path d="M417 250.200h49M441.500 225v50" stroke="#9a9a9a" stroke-width="0.600"/>
<path d="M429 388.800v8M429 398v8" stroke="#0a0a0a" stroke-width="2"/><g fill="#111"><rect x="424.7" y="392.0" width="1" height="1"/><rect x="423.6" y="393.0" width="1" height="1"/><rect x="422.8" y="395.1" width="1" height="1"/><rect x="422.8" y="399.9" width="1" height="1"/><rect x="425.9" y="403.1" width="1" height="1"/><rect x="430.9" y="403.1" width="1" height="1"/><rect x="433.0" y="401.9" width="1" height="1"/><rect x="434.1" y="401.0" width="1" height="1"/><rect x="432.0" y="392.0" width="1" height="1"/><rect x="433.9" y="394.0" width="1" height="1"/></g>
<path d="M312.300 516.300l18.300-2.300v15.300l-18.300-2.300z" stroke="#444" stroke-width="0.700" stroke-dasharray="5 1.500"/>
<path d="M305 521.300h6M313.500 521.300h4.500M319.500 521.300h4.500M325.500 521.300h12.500" stroke="#111" stroke-width="0.900"/>
<circle cx="357" cy="521.300" r="6.700" stroke="#333" stroke-width="0.700" stroke-dasharray="6 1.300"/><circle cx="357" cy="521.300" r="4.300" stroke="#333" stroke-width="0.700" stroke-dasharray="4 1.300"/>
<path d="M346 521.300h7M355.700 521.300h2.600M361 521.300h7" stroke="#111" stroke-width="0.900"/>
<g stroke="#111" stroke-width="1.100"><path d="M631.500 534.500V486.500H850.500"/><path d="M686 503.400H850.500M788.500 518.700H850.500M788.500 486.500V534.500M823.500 486.500V534.500"/></g>
<path d="M686.300 486.500V534.500" stroke="#8a8a8a" stroke-width="1.100"/>
<rect x="636" y="491" width="9" height="7.800" rx="1.600" fill="#1c6aa0"/><rect x="638.200" y="493" width="4.600" height="3.800" fill="#e9f2f8"/><rect x="639.900" y="493" width="1.200" height="3.800" fill="#1c6aa0"/>
<text x="648" y="498.700" font-family="Liberation Serif" font-size="11.300" fill="#111" textLength="33" lengthAdjust="spacingAndGlyphs">NTNU</text>
</svg>
<div class="t" style="left:120.75px;width:120px;text-align:center;top:10.699999999999989px;font-size:5.8px;color:#555">1</div>
<div class="t" style="left:120.75px;width:120px;text-align:center;top:397px;font-size:5.8px;color:#555">1</div>
<div class="t" style="left:189.25px;width:120px;text-align:center;top:10.699999999999989px;font-size:5.8px;color:#555">2</div>
<div class="t" style="left:189.25px;width:120px;text-align:center;top:397px;font-size:5.8px;color:#555">2</div>
<div class="t" style="left:257.75px;width:120px;text-align:center;top:10.699999999999989px;font-size:5.8px;color:#aaa">3</div>
<div class="t" style="left:257.75px;width:120px;text-align:center;top:397px;font-size:5.8px;color:#aaa">3</div>
<div class="t" style="left:326.25px;width:120px;text-align:center;top:10.699999999999989px;font-size:5.8px;color:#555">4</div>
<div class="t" style="left:326.25px;width:120px;text-align:center;top:397px;font-size:5.8px;color:#555">4</div>
<div class="t" style="left:394.75px;width:120px;text-align:center;top:10.699999999999989px;font-size:5.8px;color:#aaa">5</div>
<div class="t" style="left:394.75px;width:120px;text-align:center;top:397px;font-size:5.8px;color:#aaa">5</div>
<div class="t" style="left:463.25px;width:120px;text-align:center;top:10.699999999999989px;font-size:5.8px;color:#aaa">6</div>
<div class="t" style="left:463.25px;width:120px;text-align:center;top:397px;font-size:5.8px;color:#aaa">6</div>
<div class="t" style="left:531.75px;width:120px;text-align:center;top:10.699999999999989px;font-size:5.8px;color:#555">7</div>
<div class="t" style="left:531.75px;width:120px;text-align:center;top:397px;font-size:5.8px;color:#555">7</div>
<div class="t" style="left:600.25px;width:120px;text-align:center;top:10.699999999999989px;font-size:5.8px;color:#aaa">8</div>
<div class="t" style="left:84.3px;width:120px;text-align:center;top:37.5px;font-size:6.4px;color:#666">A</div>
<div class="t" style="left:638.8px;width:120px;text-align:center;top:37.5px;font-size:6.4px;color:#666">A</div>
<div class="t" style="left:84.30000000000001px;width:120px;text-align:center;top:101.5px;font-size:6.4px;color:#666">B</div>
<div class="t" style="left:638.8px;width:120px;text-align:center;top:101.5px;font-size:6.4px;color:#666">B</div>
<div class="t" style="left:84.30000000000001px;width:120px;text-align:center;top:170px;font-size:6.4px;color:#aaa">C</div>
<div class="t" style="left:638.8px;width:120px;text-align:center;top:170px;font-size:6.4px;color:#aaa">C</div>
<div class="t" style="left:84.30000000000001px;width:120px;text-align:center;top:238.5px;font-size:6.4px;color:#aaa">D</div>
<div class="t" style="left:638.8px;width:120px;text-align:center;top:238.5px;font-size:6.4px;color:#aaa">D</div>
<div class="t" style="left:84.30000000000001px;width:120px;text-align:center;top:306.5px;font-size:6.4px;color:#aaa">E</div>
<div class="t" style="left:638.8px;width:120px;text-align:center;top:306.5px;font-size:6.4px;color:#aaa">E</div>
<div class="t" style="left:84.30000000000001px;width:120px;text-align:center;top:370px;font-size:6.4px;color:#aaa">F</div>
<div class="t" style="left:638.8px;width:120px;text-align:center;top:370px;font-size:6.4px;color:#aaa">F</div>
<div class="t" style="left:444px;width:120px;text-align:center;top:367.3px;font-size:5.6px;color:#4a4a4a;text-shadow:none">NTNU Aalesund</div>
<div class="t" style="left:444px;width:120px;text-align:center;top:374.70000000000005px;font-size:5.7px;color:#a8a8a8;text-shadow:none">Larsgårdsvegen 2</div>
<div class="t" style="left:444px;width:120px;text-align:center;top:382px;font-size:5.6px;color:#4a4a4a;text-shadow:none">6009 Aalesund</div>
<div class="t" style="left:444px;width:120px;text-align:center;top:389.29999999999995px;font-size:5.6px;color:#4a4a4a;text-shadow:none">Norway</div>
<div class="t" style="left:534px;top:351px;font-size:3.3px;color:#666;text-shadow:none">This drawing is the property of NTNU Aalesund. The contents are</div>
<div class="t" style="left:534px;top:357.2px;font-size:3.45px;color:#666;text-shadow:none">confidential, copied or otherwise used without written consent.</div>
<div class="t" style="left:534px;top:365px;font-size:3.4px;color:#777">Part Name / Part Description</div>
<div class="t" style="left:534px;top:372.70000000000005px;font-size:6.7px;color:#6a6a6a;text-shadow:none">TEST</div>
<div class="t" style="left:534px;top:385.70000000000005px;font-size:6.7px;color:#333;text-shadow:none">TEST PART</div>
<div class="t" style="left:635px;top:348.7px;font-size:3.4px;color:#777">Drawn By</div>
<div class="t" style="left:591px;width:120px;text-align:center;top:357.2px;font-size:6.4px;color:#8a8a8a;text-shadow:none">PAUL</div>
<div class="t" style="left:670.5px;top:348.7px;font-size:3.4px;color:#777">Date</div>
<div class="t" style="left:622px;width:120px;text-align:center;top:357.2px;font-size:4.8px;color:#777;text-shadow:none">28.10.2019</div>
<div class="t" style="left:635px;top:365px;font-size:3.4px;color:#777">Sheet</div>
<div class="t" style="left:591px;width:120px;text-align:center;top:373.0px;font-size:6.3px;color:#333">A3 - 1 of 1</div>
<div class="t" style="left:670.5px;top:365px;font-size:3.4px;color:#777">Scale</div>
<div class="t" style="left:622px;width:120px;text-align:center;top:373.0px;font-size:6.3px;color:#444;text-shadow:none">1:2</div>
<div class="t" style="left:635px;top:380.5px;font-size:3.4px;color:#777">Part Doc ID No</div>
<div class="t" style="left:591px;width:120px;text-align:center;top:388.3px;font-size:6.3px;color:#707070;text-shadow:none">000001</div>
<div class="t" style="left:670.5px;top:380.5px;font-size:3.4px;color:#777">Revision</div>
<div class="t" style="left:622px;width:120px;text-align:center;top:388.3px;font-size:6.3px;color:#777;text-shadow:none">A</div>
<div class="t" style="left:605px;width:120px;text-align:center;top:397px;font-size:5.6px;color:#333">A3</div>
<div class="t" style="left:2px;top:407.5px;font-size:7px;color:#222">Sheet "Sheet 1" Work</div>
</div>
<!-- RIGHT SIDEBAR -->
<div id="rside" class="abs">
<svg class="abs" style="left:0;top:0" width="25" height="433" viewBox="999 122 25 433" fill="none" stroke-linecap="round" stroke-linejoin="round">
<!-- 1 projected -->
<g stroke-width="0.900"><path d="M1003 137.500l8-6l4.500 3.500l-8 6.500zM1007 134.500l4.500 4" stroke="#d88d45"/><path d="M1009 142.500l4.500-4.500h5.500v8.500h-6.500z" stroke="#4fb6cc" fill="#f2fbfd"/></g>
<!-- 2 base view -->
<rect x="1003.300" y="153.500" width="12.500" height="12.500" stroke="#cfa45f" stroke-width="0.800" fill="#fbf7ef"/>
<path d="M1005 159c0-3 2-5 4.500-5l1 1v5l4 1.500v2l-4.500 2l-5-2z" fill="#8e9194" stroke="#55585b" stroke-width="0.500"/>
<g stroke="#2b2b2b" stroke-width="0.700"><circle cx="1015.300" cy="166.300" r="3.400" fill="#fefefe"/><path d="M1013.300 166.300h4M1015.300 164.300v4"/></g>
<!-- 3 fit -->
<g stroke="#333" stroke-width="0.800"><path d="M1003.300 192.500v-16h15.500v16M1003.300 178.300h15.500"/><path d="M1006 181.500l2.500 2.500M1016 181.500l-2.500 2.500M1006 190.500l2.500-2.500M1016 190.500l-2.500-2.500M1006 183v-1.500h1.500M1016 183v-1.500h-1.500M1006 189v1.500h1.500M1016 189v1.500h-1.500" stroke-width="0.600"/></g>
<!-- 4 line -->
<path d="M1003 214l16-15.500" stroke="#3e95aa" stroke-width="0.900"/><path d="M1003 214l16-15.500" stroke="#9adbe8" stroke-width="0.400"/>
<!-- 5 -->
<g stroke="#2b2b2b" stroke-width="0.900"><path d="M1003.300 221.500v10h7.500M1018.500 221.500v8" /></g>
<g stroke="#2b2b2b" stroke-width="0.700"><circle cx="1015.300" cy="233.500" r="3.400" fill="#fefefe"/><path d="M1013.300 233.500h4M1015.300 231.500v4"/></g>
<!-- 6 section -->
<g stroke-width="0.700"><rect x="1004" y="245.500" width="4.500" height="10" fill="#f1c48f" stroke="#d88d45"/><rect x="1013.500" y="245.500" width="4.500" height="10" fill="#f1c48f" stroke="#d88d45"/><path d="M1004 256h14" stroke="#d88d45"/><path d="M1010 245.500v10M1012 245.500v10" stroke="#7fd3e2"/></g>
<!-- 7 arc -->
<path d="M1003.300 283c0-9 6-16.500 15.500-16.800" stroke="#4fb6cc" stroke-width="0.900"/>
<!-- 8 rect -->
<rect x="1003.300" y="291.300" width="15.700" height="9.400" stroke="#7fd3e2" stroke-width="0.900" fill="#f3fcfd"/>
<!-- 9 -->
<path d="M1003.300 313.300v11.200h15.700" stroke="#2b2b2b" stroke-width="0.900"/><rect x="1012" y="319.500" width="7" height="4.500" fill="#d4802e"/><rect x="1010" y="314" width="9" height="5" fill="#e9e9ea"/>
<!-- 10 -->
<rect x="1003.300" y="333.300" width="14" height="9.700" stroke="#2b2b2b" stroke-width="0.900"/><rect x="1010" y="339" width="7" height="4" fill="#c9c9c9"/>
<path d="M1018.500 341.500l-6 6.500" stroke="#fefefe" stroke-width="2.600"/><path d="M1018.500 341.500l-6 6.500" stroke="#444" stroke-width="0.700"/><path d="M1016.500 340l3.500 3M1011.300 346.500l2 2" stroke="#444" stroke-width="0.700"/>
<path d="M1006.500 547.800l-2 1.400l2 1.400z" fill="#333"/>
</svg>
</div>
<!-- TASKBAR -->
<div id="task" class="abs">
<svg class="abs" style="left:0;top:0" width="1024" height="22" viewBox="0 554.500 1024 22" fill="none" stroke-linecap="round" stroke-linejoin="round">
<rect x="25" y="554.500" width="183.500" height="22" fill="#f2f2f2"/>
<rect x="460" y="554.500" width="85.500" height="22" fill="#353537"/>
<g fill="#7db3df"><rect x="239" y="573.600" width="81" height="2.500"/><rect x="376" y="573.600" width="81" height="2.500"/><rect x="460" y="573.600" width="85.500" height="2.500" fill="#8ebfe6"/></g>
<!-- start -->
<g fill="#f5f5f5"><rect x="9" y="561" width="3.700" height="3.700"/><rect x="13.300" y="561" width="3.700" height="3.700"/><rect x="9" y="565.300" width="3.700" height="3.700"/><rect x="13.300" y="565.300" width="3.700" height="3.700"/></g>
<!-- search icon -->
<circle cx="37.200" cy="563" r="2.600" stroke="#333" stroke-width="0.800"/><path d="M35.300 565l-2.500 2.800" stroke="#333" stroke-width="0.800"/>
<!-- task view -->
<g stroke="#f0f0f0" stroke-width="0.900"><path d="M218.500 562v6.500h5v-6.500M225.500 562.500h1.500M225.500 566.500h1.500"/></g><rect x="219.800" y="560.800" width="1.300" height="1.300" fill="#f0f0f0"/>
<!-- folder -->
<path d="M243.300 559.500h5.500l1.200 1.200v9.600h-6.700z" fill="#f3c94e"/><path d="M243.300 559.500h2v10.800h-2z" fill="#e0a93a"/>
<!-- edge -->
<circle cx="334.500" cy="564.800" r="5.800" fill="#2a86d4"/>
<path d="M328.800 565.800a5.800 5.800 0 0 0 9.500 4c-3.300 .3-5.800-1.600-5.800-4.200c0-1.400 .900-2.500 2.300-3c-3-.4-5.500 .8-6 3.200z" fill="#43d2b4"/>
<path d="M333.500 564.300c1.500-1 4-.8 6.700 .800c0 1.500-1 2.700-2.500 2.700h-3.200c-1-.8-1.500-2.300-1-3.500z" fill="#1c1c1e"/>
<path d="M329.200 563c1-2.500 3-4 5.500-4c3 0 5.500 2.300 5.500 5.300c-1-2-3.500-3-6-2.800c-2 .2-4 .8-5 1.500z" fill="#3aa0e6"/>
<!-- outlook -->
<rect x="358" y="559.800" width="8.500" height="10" fill="#2b88d8"/><rect x="358" y="564.500" width="8.500" height="5.300" fill="#1763b5"/><rect x="354.300" y="561.800" width="6.800" height="6.800" rx="0.800" fill="#0f5fb5"/><circle cx="357.700" cy="565.200" r="1.700" stroke="#f2f7fc" stroke-width="0.900"/>
<!-- NX icons -->
<g><rect x="379.500" y="558.300" width="12.300" height="12.700" fill="#2f8d96"/><rect x="380.700" y="558.300" width="11.100" height="11.600" fill="#8f1b22"/><text x="381.600" y="568" font-family="Liberation Sans" font-weight="bold" font-size="7.200" fill="#f6f0f0" textLength="9.300" lengthAdjust="spacingAndGlyphs">NX</text></g>
<g><rect x="465.500" y="558.300" width="12.300" height="12.700" fill="#2f8d96"/><rect x="466.700" y="558.300" width="11.100" height="11.600" fill="#8f1b22"/><text x="467.600" y="568" font-family="Liberation Sans" font-weight="bold" font-size="7.200" fill="#f6f0f0" textLength="9.300" lengthAdjust="spacingAndGlyphs">NX</text></g>
<!-- tray -->
<path d="M931.500 566l3.300-2.800l3.300 2.800" stroke="#eee" stroke-width="0.900"/>
<g stroke="#f2f2f2" stroke-width="0.900"><path d="M944 561.500v4h7.500v-4M944 563h2M947 565.500v2.500M945 568.500h4"/></g><rect x="943.500" y="561.300" width="2.400" height="2.800" fill="#f2f2f2"/>
<g stroke="#eee" stroke-width="0.800"><path d="M956.500 563.800h1.500l2-2v6.500l-2-2h-1.500zM961.500 562.500l3 4.500M964.500 562.500l-3 4.500"/></g>
</svg>
<div class="t" style="left:47px;top:6.500px;font-size:7.600px;color:#3c3c3c">Type here to search</div>
<div class="t" style="left:257px;top:6.300px;font-size:6.200px;color:#f2f2f2">Siemens</div>
<div class="t" style="left:394.500px;top:6.300px;font-size:6.500px;color:#f2f2f2">Route</div>
<div class="t" style="left:480.500px;top:6.300px;font-size:6.500px;color:#f2f2f2">NXcustom - Drafting</div>
<div class="t" style="left:969.600px;top:6.500px;font-size:5.700px;color:#f2f2f2">NOB</div>
<div class="t" style="left:996px;top:1.800px;font-size:5.600px;color:#f2f2f2">09:19</div>
<div class="t" style="left:989px;top:11px;font-size:5.650px;color:#f2f2f2">02.05.2022</div>
</div>
</div>
</body>
</html>
